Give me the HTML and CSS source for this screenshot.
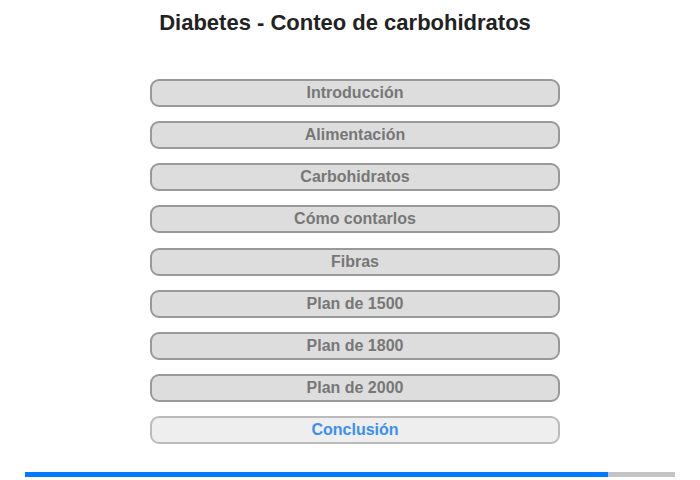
FILE: index.html
```html
<!DOCTYPE html>
<html lang="es">
<head>
    <meta charset="UTF-8">
    <title>Diabetes - Conteo de carbohidratos</title>
    <link rel="stylesheet" href="styles.css">
</head>
<body>
<h1 class="title">Diabetes - Conteo de carbohidratos</h1>

<div class="menu">
    <div class="item">Introducción</div>
    <div class="item">Alimentación</div>
    <div class="item">Carbohidratos</div>
    <div class="item">Cómo contarlos</div>
    <div class="item">Fibras</div>
    <div class="item">Plan de 1500</div>
    <div class="item">Plan de 1800</div>
    <div class="item">Plan de 2000</div>
    <div class="item current">Conclusión</div>
</div>

<div class="progress">
    <div class="bar" style="width: 89.7%"></div>
</div>
</body>
</html>
```

FILE: styles.css
```css
*{
    margin: 0;
    padding: 0;
    box-sizing: border-box;
}
body{
    font-family: "Liberation Sans", Arial, sans-serif;
    background-color: #fff;
}
.title{
    font-size: 22px;
    font-weight: bold;
    color: #222;
    text-align: center;
    padding-top: 10px;
    height: 79px;
    padding-right: 10px;
}
.menu{
    width: 410px;
    margin-left: 150px;
    display: flex;
    flex-direction: column;
    gap: 14.15px;
}
.item{
    height: 28px;
    line-height: 24px;
    border: 2px solid #999;
    border-radius: 9px;
    background-color: #ddd;
    color: #777;
    font-size: 16px;
    font-weight: bold;
    text-align: center;
}
.item.current{
    background-color: #eee;
    border-color: #bbb;
    color: #3d8ef2;
}
.progress{
    margin: 28px 25px 0;
    height: 5px;
    background-color: #c4c4c4;
}
.bar{
    height: 100%;
    background-color: #007bff;
}
```
